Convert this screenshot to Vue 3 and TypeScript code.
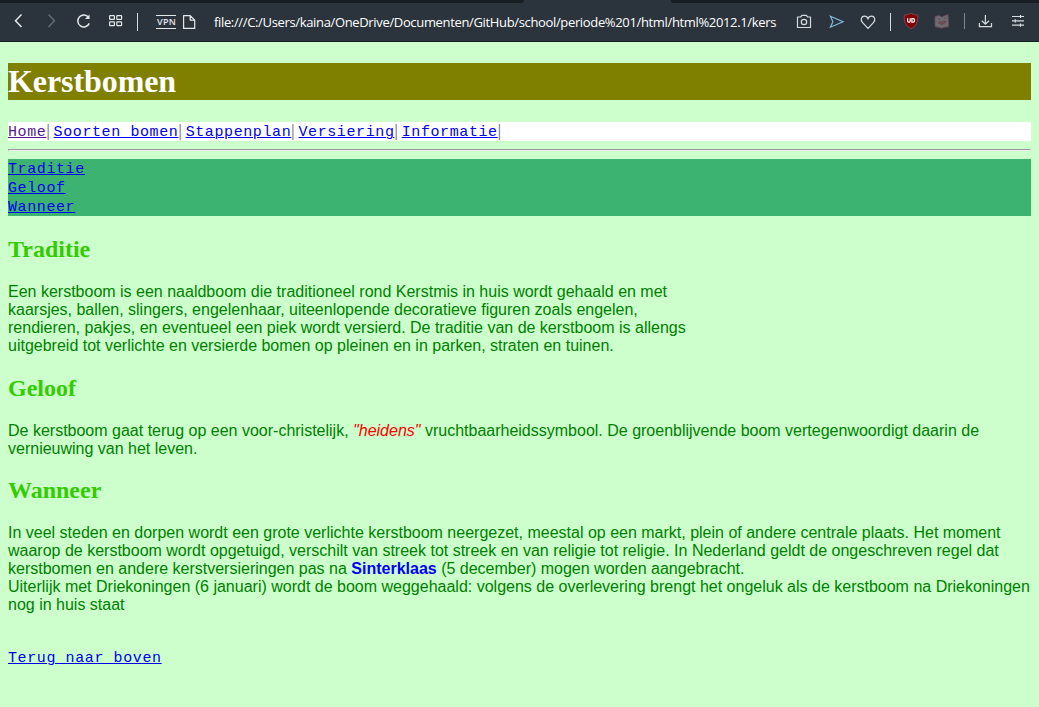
<script setup lang="ts">
const pages: string[] = ['Soorten bomen', 'Stappenplan', 'Versiering', 'Informatie']
const anchors: string[] = ['Traditie', 'Geloof', 'Wanneer']
</script>

<template>
  <div class="window">
    <header class="toolbar">
      <div class="tab-strip"><i class="tabs-left"></i><i class="tabs-right"></i></div>
      <svg class="icons" width="210" height="42" viewBox="0 0 210 42" fill="none" stroke="#e3e8ea" stroke-width="1.3">
        <path d="M21.5 14.5 15.5 20.7 21.5 27" stroke-width="1.5" />
        <path d="M48.5 14.5 54.5 20.7 48.5 27" stroke="#66717a" />
        <path d="M88.8 17.6A6 6 0 1 0 89.3 23.4" stroke-width="1.5" />
        <path d="M89.5 14.5V19H85Z" fill="#e3e8ea" stroke="none" />
        <g stroke-width="1.2">
          <rect x="109.6" y="15.6" width="4.8" height="3.8" rx=".6" />
          <rect x="116.8" y="15.6" width="4.8" height="3.8" rx=".6" />
          <rect x="109.6" y="21.8" width="4.8" height="3.8" rx=".6" />
          <rect x="116.8" y="21.8" width="4.8" height="3.8" rx=".6" />
        </g>
        <path d="M137.5 13V31" stroke="#d5dcdf" stroke-width="1" />
        <path d="M156 15.5H176M156 28.5H176" stroke-width="1" />
        <text x="157" y="25" class="vpn">VPN</text>
        <path d="M183.6 15.6H190.2L194.7 20.1V28.4H183.6ZM190.2 15.6V20.1H194.7" stroke-width="1.2" stroke-linejoin="round" />
      </svg>
      <div class="address">file:///C:/Users/kaina/OneDrive/Documenten/GitHub/school/periode%201/html/html%2012.1/kers</div>
      <svg class="icons right" width="259" height="42" viewBox="780 0 259 42" fill="none" stroke="#d5dcdf" stroke-width="1.2">
        <path d="M797.5 17H800.5L802 15.4H806.3L807.7 17H810.5V27.5H797.5Z" stroke-linejoin="round" />
        <circle cx="804" cy="22" r="2.7" />
        <path d="M830.4 16.3 843 21.8 830.4 27.2 832.9 21.8Z" stroke="#82bddc" />
        <path d="M868 28.3 862.6 22.7C859.8 19.4 861.6 16.2 864.5 16.2 866.5 16.2 867.5 17.4 868 18.7 868.5 17.4 869.5 16.2 871.5 16.2 874.4 16.2 876.2 19.4 873.4 22.7Z" />
        <path d="M890.5 13V31" stroke-width="1" />
        <path d="M911 13.2Q914 15.2 917.7 15.2C918 22 916.5 26 911 28.6 905.5 26 904 22 904.3 15.2Q908 15.2 911 13.2Z" fill="#800008" stroke="#97535a" stroke-width=".7" />
        <path d="M907.6 18.2V20.7Q907.6 22.2 908.9 22.2T910.2 20.7V18.2" stroke="white" />
        <path d="M911.9 18.7H913Q914.6 18.7 914.6 20.4T913 22.2H911.9Z" stroke="white" />
        <path d="M935 16.5 939 15.5 941.5 17 948 14.5 948.8 26.8 944 27.2 942 28.2 935 26.5Z" fill="#6b6c74" stroke="#72464f" stroke-width=".8" />
        <path d="M938.3 18.5 940.3 20M944 19.5 946 17.5M938.5 22.3Q942 26.5 946.2 21.5M938.5 22.3 946.2 21.5M942.2 22V24.2" stroke="#70343e" stroke-width=".9" />
        <path d="M964.5 13V29" stroke="#7d868c" stroke-width="1" />
        <path d="M985.4 15V24M981.8 20.7 985.4 24.2 989 20.7M979.4 23V26.7H991.5V23" />
        <path d="M1012 16.5H1024M1012 20.8H1024M1012 25.1H1024M1020.5 14.9V18.1M1015.3 19.2V22.4M1020.5 23.5V26.7" />
      </svg>
    </header>

    <main>
      <h1>Kerstbomen</h1>
      <nav class="pages"><a class="visited" href="#">Home</a>| <template v-for="page in pages" :key="page"><a href="#">{{ page }}</a>| </template></nav>
      <hr />
      <nav class="contents">
        <a v-for="anchor in anchors" :key="anchor" :href="'#' + anchor">{{ anchor }}</a>
      </nav>

      <h2 id="Traditie">Traditie</h2>
      <p>Een kerstboom is een naaldboom die traditioneel rond Kerstmis in huis wordt gehaald en met<br />kaarsjes, ballen, slingers, engelenhaar, uiteenlopende decoratieve figuren zoals engelen,<br />rendieren, pakjes, en eventueel een piek wordt versierd. De traditie van de kerstboom is allengs<br />uitgebreid tot verlichte en versierde bomen op pleinen en in parken, straten en tuinen.</p>

      <h2 id="Geloof">Geloof</h2>
      <p>De kerstboom gaat terug op een voor-christelijk, <em>"heidens"</em> vruchtbaarheidssymbool. De groenblijvende boom vertegenwoordigt daarin de<br />vernieuwing van het leven.</p>

      <h2 id="Wanneer" class="closer">Wanneer</h2>
      <p>In veel steden en dorpen wordt een grote verlichte kerstboom neergezet, meestal op een markt, plein of andere centrale plaats. Het moment<br />waarop de kerstboom wordt opgetuigd, verschilt van streek tot streek en van religie tot religie. In Nederland geldt de ongeschreven regel dat<br />kerstbomen en andere kerstversieringen pas na <strong>Sinterklaas</strong> (5 december) mogen worden aangebracht.<br />Uiterlijk met Driekoningen (6 januari) wordt de boom weggehaald: volgens de overlevering brengt het ongeluk als de kerstboom na Driekoningen<br />nog in huis staat</p>
      <a class="back" href="#">Terug naar boven</a>
    </main>
  </div>
</template>

<style>
body {
  margin: 0;
  background: #ccffcc;
}
</style>

<style scoped>
.window {
  height: 707px;
  overflow: hidden;
  background: #ccffcc;
  font: 16px/18px "Liberation Serif", serif;
}
.toolbar {
  position: relative;
  display: flex;
  height: 42px;
  box-sizing: border-box;
  background: #2b343d;
  border-bottom: 1px solid #151b20;
}
.tab-strip {
  position: absolute;
  inset: 0 0 auto;
  display: flex;
  justify-content: space-between;
  height: 3px;
}
.tab-strip i {
  background: #171d21;
}
.tabs-left {
  width: 524px;
  border-bottom-right-radius: 3px;
}
.tabs-right {
  width: 368px;
  border-bottom-left-radius: 3px;
}
.icons {
  flex: none;
}
.right {
  margin-left: auto;
}
.vpn {
  font: 600 9px "Open Sans", sans-serif;
  letter-spacing: 0.3px;
  fill: #e3e8ea;
  stroke: none;
}
.address {
  margin-left: 4px;
  white-space: nowrap;
  color: #fff;
  font: 13px/44px "Open Sans", sans-serif;
  letter-spacing: -0.345px;
}
main {
  padding: 21px 8px 0;
}
h1 {
  margin: 0 0 22px;
  height: 37px;
  font-size: 32px;
  line-height: 37px;
  letter-spacing: -0.08px;
  color: #fff;
  background: #808000;
}
.pages {
  height: 19px;
  line-height: 17px;
  background: #fff;
  color: #555;
  white-space: nowrap;
}
a {
  font: 15px/19px "Liberation Mono", monospace;
  letter-spacing: 0.6px;
  color: #0000ee;
  text-decoration: underline;
  text-decoration-thickness: 1px;
}
.pages a {
  line-height: 17px;
}
.visited {
  color: #551a8b;
}
hr {
  margin: 8px 0;
  border: 1px solid;
  border-color: #9a9a9a #eee #eee #9a9a9a;
}
.contents {
  display: flex;
  flex-direction: column;
  align-items: flex-start;
  height: 56px;
  padding-top: 1px;
  background: #3cb371;
}
h2 {
  margin: 20px 0;
  font-size: 24px;
  line-height: 27px;
  color: #33cc00;
}
.closer {
  margin-top: 19px;
}
p {
  margin: 0;
  font-family: "Liberation Sans", Arial, sans-serif;
  line-height: 18px;
  color: #008000;
  white-space: nowrap;
}
em {
  color: #f00;
}
strong {
  color: #00f;
}
.back {
  display: inline-block;
  margin-top: 35px;
}
</style>
